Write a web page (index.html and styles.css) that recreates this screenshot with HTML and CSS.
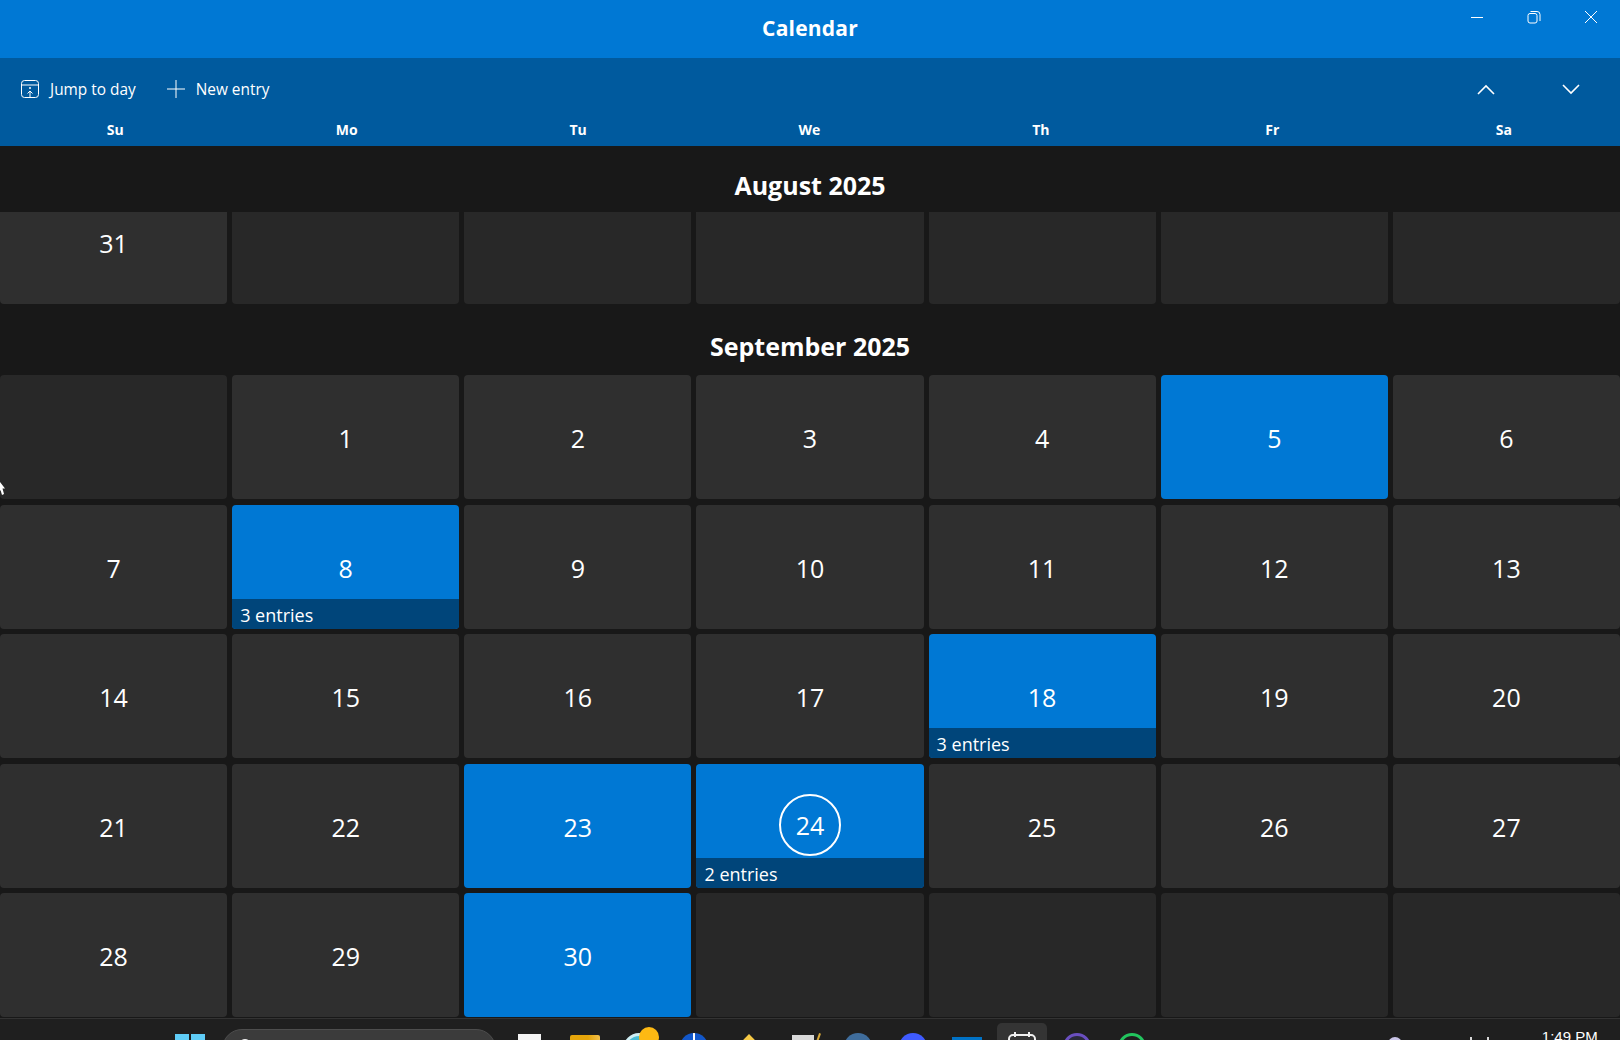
FILE: index.html
```html
<!DOCTYPE html>
<html lang="en">
<head>
    <meta charset="UTF-8">
    <meta name="viewport" content="width=device-width, initial-scale=1.0">
    <title>Calendar</title>
    <link rel="stylesheet" href="styles.css">
</head>
<body>
    <div class="app">
        <header class="titlebar">
            <div class="title">Calendar</div>
            <div class="window-controls">
                <svg width="14" height="14" viewBox="0 0 14 14"><path d="M1 7.5h12" /></svg>
                <svg width="14" height="14" viewBox="0 0 14 14"><rect x="1" y="3.5" width="9" height="9.5" rx="2" /><path d="M3.5 1.5h6.5a3 3 0 0 1 3 3v6.5" /></svg>
                <svg width="14" height="14" viewBox="0 0 14 14"><path d="M1 1l12 12M13 1L1 13" /></svg>
            </div>
        </header>

        <div class="toolbar">
            <div class="commands">
                <div class="command">
                    <svg width="20" height="20" viewBox="0 0 20 20"><rect x="1.5" y="1.5" width="17" height="17" rx="3" /><path d="M1.5 6h17M10 18.5v-6M7.5 14.5l2.5-2.5 2.5 2.5" /><circle class="dot" cx="10" cy="9" r="1" /></svg>
                    <span>Jump to day</span>
                </div>
                <div class="command command-new">
                    <svg width="20" height="20" viewBox="0 0 20 20"><path d="M10 1v18M1 10h18" /></svg>
                    <span>New entry</span>
                </div>
                <div class="pager">
                    <svg width="18" height="11" viewBox="0 0 18 11"><path d="M1 10l8-8 8 8" /></svg>
                    <svg width="18" height="11" viewBox="0 0 18 11"><path d="M1 1l8 8 8-8" /></svg>
                </div>
            </div>
            <div class="weekdays">
                <div>Su</div><div>Mo</div><div>Tu</div><div>We</div><div>Th</div><div>Fr</div><div>Sa</div>
            </div>
        </div>

        <main class="months">
            <h2 class="month-title month-august">August 2025</h2>
            <div class="grid grid-clipped">
                <div class="day">31</div>
                <div class="day empty"></div>
                <div class="day empty"></div>
                <div class="day empty"></div>
                <div class="day empty"></div>
                <div class="day empty"></div>
                <div class="day empty"></div>
            </div>

            <h2 class="month-title month-september">September 2025</h2>
            <div class="grid">
                <div class="day empty"></div>
                <div class="day">1</div>
                <div class="day">2</div>
                <div class="day">3</div>
                <div class="day">4</div>
                <div class="day active">5</div>
                <div class="day">6</div>

                <div class="day">7</div>
                <div class="day active">8<div class="entries">3 entries</div></div>
                <div class="day">9</div>
                <div class="day">10</div>
                <div class="day">11</div>
                <div class="day">12</div>
                <div class="day">13</div>

                <div class="day">14</div>
                <div class="day">15</div>
                <div class="day">16</div>
                <div class="day">17</div>
                <div class="day active">18<div class="entries">3 entries</div></div>
                <div class="day">19</div>
                <div class="day">20</div>

                <div class="day">21</div>
                <div class="day">22</div>
                <div class="day active">23</div>
                <div class="day active"><span class="today">24</span><div class="entries">2 entries</div></div>
                <div class="day">25</div>
                <div class="day">26</div>
                <div class="day">27</div>

                <div class="day">28</div>
                <div class="day">29</div>
                <div class="day active">30</div>
                <div class="day empty"></div>
                <div class="day empty"></div>
                <div class="day empty"></div>
                <div class="day empty"></div>
            </div>
        </main>

        <footer class="taskbar">
            <div class="start">
                <span></span><span></span>
            </div>
            <div class="search"><span class="search-glass"></span></div>
            <div class="tasks">
                <div class="task"><span class="icon icon-white"></span></div>
                <div class="task"><span class="icon icon-folder"></span></div>
                <div class="task"><span class="icon icon-edge"></span><span class="badge"></span></div>
                <div class="task"><span class="icon icon-globe"></span></div>
                <div class="task"><span class="icon icon-star"></span></div>
                <div class="task"><span class="icon icon-doc"></span></div>
                <div class="task"><span class="icon icon-steel"></span></div>
                <div class="task"><span class="icon icon-blue"></span></div>
                <div class="task"><span class="icon icon-mail"></span></div>
                <div class="task task-active">
                    <svg class="icon-cal" width="28" height="22" viewBox="0 0 28 22"><rect x="1" y="3" width="26" height="22" rx="4" /><path d="M7 0v5M21 0v5" /></svg>
                </div>
                <div class="task"><span class="icon icon-ring-purple"></span></div>
                <div class="task"><span class="icon icon-ring-green"></span></div>
            </div>
            <div class="tray">
                <span class="tray-dot"></span>
                <span class="tray-tick tray-tick-a"></span>
                <span class="tray-tick"></span>
                <span class="clock">1:49 PM</span>
            </div>
        </footer>

        <svg class="cursor" width="5" height="14" viewBox="0 0 5 14"><path d="M0 0l5 6.5H2.5L4 12l-2 1-1.5-5L0 9z" /></svg>
    </div>
</body>
</html>
```

FILE: styles.css
```css
body {
    margin: 0;
    font-family: "Open Sans", sans-serif;
    color: #fff;
    background-color: #181818;
}

.app {
    position: relative;
    display: flex;
    flex-direction: column;
    height: 1040px;
    overflow: hidden;
}

svg path,
svg rect {
    fill: none;
    stroke: #fff;
}

/* title bar */
.titlebar {
    display: flex;
    justify-content: center;
    align-items: center;
    position: relative;
    box-sizing: border-box;
    height: 58px;
    padding-bottom: 2px;
    background-color: #0078d4;
}
.title {
    font-size: 21px;
    font-weight: 700;
    letter-spacing: 0.2px;
}
.window-controls {
    position: absolute;
    top: 10px;
    right: 22px;
    display: flex;
    gap: 43px;
}

/* toolbar + weekday row */
.toolbar {
    height: 88px;
    background-color: #005a9e;
}
.commands {
    display: flex;
    align-items: center;
    height: 62px;
    padding-left: 20px;
    padding-right: 40px;
    font-size: 15.4px;
}
.command {
    display: flex;
    align-items: center;
    gap: 10px;
}
.command-new {
    margin-left: 30px;
}
.dot {
    fill: #fff;
}
.pager {
    display: flex;
    gap: 67px;
    margin-left: auto;
}
.pager path {
    stroke-width: 1.6;
}
.weekdays {
    display: grid;
    grid-template-columns: repeat(7, 1fr);
    gap: 5px;
    padding-left: 2px;
    padding-right: 3px;
    text-align: center;
    font-size: 14px;
    font-weight: 700;
}

/* month grids */
.month-title {
    margin: 0;
    text-align: center;
    font-size: 25px;
    font-weight: 700;
}
.month-august {
    height: 66px;
    line-height: 78px;
}
.month-september {
    height: 71px;
    line-height: 84px;
}
.grid {
    display: grid;
    grid-template-columns: repeat(7, 1fr);
    grid-auto-rows: 124px;
    gap: 5.5px 5px;
}
.grid-clipped {
    grid-auto-rows: 92px;
}
.day {
    position: relative;
    display: flex;
    justify-content: center;
    align-items: center;
    box-sizing: border-box;
    padding-top: 2px;
    overflow: hidden;
    border-radius: 4px;
    background-color: #2f2f2f;
    font-size: 25px;
}
.grid-clipped .day {
    padding-top: 0;
    padding-bottom: 30px;
    border-radius: 0 0 4px 4px;
}
.day.empty {
    background-color: #282828;
}
.day.active {
    background-color: #0078d4;
}
.entries {
    position: absolute;
    left: 0;
    right: 0;
    bottom: 0;
    height: 30px;
    padding-left: 8px;
    background-color: #00457a;
    font-size: 18px;
    line-height: 32px;
}
.today {
    display: flex;
    justify-content: center;
    align-items: center;
    width: 58px;
    height: 58px;
    margin-top: -4px;
    border: 2px solid #fff;
    border-radius: 50%;
}

/* taskbar, cut off by the bottom of the window */
.taskbar {
    display: flex;
    margin-top: auto;
    height: 22px;
    overflow: hidden;
    box-sizing: border-box;
    border-top: 1px solid #333;
    background-color: #1f1f1f;
}
.start {
    display: grid;
    grid-template-columns: 14px 14px;
    gap: 2px;
    margin: 15px 0 0 175px;
}
.start span {
    height: 14px;
    background-color: #5fcdf7;
}
.search {
    box-sizing: border-box;
    width: 274px;
    height: 40px;
    margin: 10px 6.6px 0 17px;
    padding: 9px 0 0 16px;
    border: 1px solid #4d4d4d;
    border-radius: 20px;
    background-color: #3b3b3b;
}
.search-glass {
    display: block;
    width: 8px;
    height: 8px;
    border: 2px solid #eee;
    border-radius: 50%;
}
.tasks {
    display: flex;
}
.task {
    position: relative;
    display: flex;
    justify-content: center;
    width: 54.7px;
    height: 40px;
}
.task-active {
    box-sizing: border-box;
    width: 50px;
    margin: 4px 2.35px 0;
    border-radius: 5px 5px 0 0;
    background-color: #343434;
}
.icon {
    display: block;
    box-sizing: border-box;
    width: 28px;
    height: 28px;
    margin-top: 15px;
}
.icon-white {
    width: 23px;
    background-color: #f4f4f4;
}
.icon-folder {
    width: 30px;
    margin-top: 16px;
    border-radius: 2px;
    background: linear-gradient(90deg, #e5a50a 60%, #f2c14e);
}
.icon-edge {
    width: 32px;
    height: 32px;
    margin-top: 14px;
    border-radius: 50%;
    background: linear-gradient(#4fc3d9, #1d7fb5);
    border: 3px solid #cfeef4;
}
.badge {
    position: absolute;
    top: 8px;
    left: 27px;
    width: 20px;
    height: 20px;
    border-radius: 50%;
    background-color: #fdb913;
}
.icon-globe {
    margin-top: 14px;
    border-radius: 50%;
    background: linear-gradient(90deg, #1257c9 47%, #fff 47%, #fff 53%, #1257c9 53%);
}
.icon-star {
    width: 14px;
    height: 14px;
    margin-top: 18px;
    background-color: #f6c945;
    transform: rotate(45deg);
}
.icon-doc {
    position: relative;
    width: 22px;
    margin-top: 16px;
    background-color: #d9d9d9;
}
.icon-doc::after {
    content: "";
    position: absolute;
    top: -2px;
    right: -5px;
    width: 2px;
    height: 12px;
    background-color: #d8a93a;
    transform: rotate(20deg);
}
.icon-steel {
    margin-top: 14px;
    border-radius: 50%;
    background-color: #3f6d9c;
}
.icon-blue {
    margin-top: 14px;
    border-radius: 50%;
    background-color: #3f5bff;
}
.icon-mail {
    width: 30px;
    margin-top: 18px;
    background-color: #0072c6;
}
.icon-cal {
    margin-top: 9px;
}
.icon-cal rect,
.icon-cal path {
    stroke-width: 2;
    stroke: #f0f0f0;
}
.icon-ring-purple {
    margin-top: 14px;
    border: 3px solid #6a4fc0;
    border-radius: 50%;
    background-color: #2a2a3c;
}
.icon-ring-green {
    margin-top: 14px;
    border: 3px solid #22c55e;
    border-radius: 50%;
}
.tray {
    display: flex;
    flex: 1;
    padding-left: 229px;
    font-size: 15px;
}
.tray-dot {
    flex: none;
    width: 14px;
    height: 14px;
    margin-top: 18px;
    border-radius: 50%;
    background-color: #c9c4e8;
}
.tray-tick {
    flex: none;
    width: 2px;
    height: 6px;
    margin: 18px 0 0 15px;
    background-color: #d8d8d8;
}
.tray-tick-a {
    margin-left: 68px;
}
.clock {
    margin: 9px 0 0 53px;
    font-family: "Liberation Sans", sans-serif;
    white-space: nowrap;
}

.cursor {
    position: absolute;
    top: 482px;
    left: 0;
}
.cursor path {
    fill: #fff;
    stroke: none;
}
```
